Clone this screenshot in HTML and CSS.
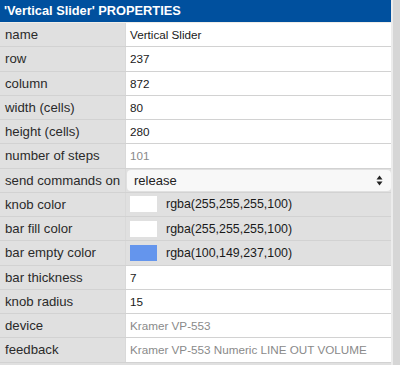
FILE: index.html
```html
<!DOCTYPE html>
<html lang="en">
<head>
  <meta charset="UTF-8">
  <title>Vertical Slider properties</title>
  <link rel="stylesheet" href="styles.css">
</head>
<body>
  <div class="frame">
    <div class="panel">
      <div class="panel-title">'Vertical Slider' PROPERTIES</div>
      <table class="props">
        <tr><td class="label">name</td><td class="value">Vertical Slider</td></tr>
        <tr><td class="label">row</td><td class="value">237</td></tr>
        <tr><td class="label">column</td><td class="value">872</td></tr>
        <tr><td class="label">width (cells)</td><td class="value">80</td></tr>
        <tr><td class="label">height (cells)</td><td class="value">280</td></tr>
        <tr><td class="label">number of steps</td><td class="value muted">101</td></tr>
        <tr>
          <td class="label">send commands on</td>
          <td class="value grey">
            <div class="select">
              <span>release</span>
              <svg class="arrows" width="7" height="11" viewBox="0 0 7 11"><path d="M3.5 0.5 L6.5 4.5 L0.5 4.5 Z M3.5 10.5 L6.5 6.5 L0.5 6.5 Z" fill="#222"/></svg>
            </div>
          </td>
        </tr>
        <tr>
          <td class="label">knob color</td>
          <td class="value grey"><div class="color"><span class="swatch"></span>rgba(255,255,255,100)</div></td>
        </tr>
        <tr>
          <td class="label">bar fill color</td>
          <td class="value grey"><div class="color"><span class="swatch"></span>rgba(255,255,255,100)</div></td>
        </tr>
        <tr>
          <td class="label">bar empty color</td>
          <td class="value grey"><div class="color"><span class="swatch" style="background: rgb(100,149,237)"></span>rgba(100,149,237,100)</div></td>
        </tr>
        <tr><td class="label">bar thickness</td><td class="value">7</td></tr>
        <tr><td class="label">knob radius</td><td class="value">15</td></tr>
        <tr><td class="label">device</td><td class="value muted">Kramer VP-553</td></tr>
        <tr><td class="label">feedback</td><td class="value muted">Kramer VP-553 Numeric LINE OUT VOLUME</td></tr>
      </table>
    </div>
    <div class="scrollbar"></div>
  </div>
</body>
</html>
```

FILE: styles.css
```css
body {
  margin: 0;
  font-family: 'Liberation Sans', Arial, sans-serif;
  background-color: #ececec;
}
.frame {
  display: flex;
  gap: 2px;
  height: 365px;
  overflow: hidden;
}
.panel {
  width: 391px;
  background-color: #e0e0e0;
}
.panel-title {
  height: 22px;
  line-height: 22px;
  padding-left: 4px;
  background-color: #00509e;
  color: #ffffff;
  font-size: 12.8px;
  font-weight: bold;
  border-bottom: 1px solid #f0ede8;
}
.scrollbar {
  flex: 1;
  background-color: #d6d6d6;
}
.props {
  width: 100%;
  border-collapse: collapse;
  table-layout: fixed;
}
.props td {
  height: 23.25px;
  padding: 0;
  border-bottom: 1px solid #d2d2d2;
}
.label {
  width: 120px;
  padding-left: 5px !important;
  font-size: 13.2px;
  color: #2a2a2a;
  background-color: #e0e0e0;
  border-right: 1px solid #d9d9d9;
}
.value {
  padding-left: 4px !important;
  font-size: 11.7px;
  color: #1a1a1a;
  background-color: #ffffff;
  white-space: nowrap;
  overflow: hidden;
}
.value.muted {
  color: #8a8a8a;
}
.value.grey {
  background-color: #e0e0e0;
  padding-left: 0 !important;
}
.select {
  display: flex;
  align-items: center;
  justify-content: space-between;
  height: 21px;
  margin: 0 0 0 1px;
  padding: 0 8px 0 7px;
  font-size: 13px;
  color: #222;
  background-color: #f8f8f8;
  border-radius: 4px;
}
.color {
  display: flex;
  align-items: center;
  gap: 9px;
  padding-left: 4px;
  font-size: 12.4px;
  color: #1a1a1a;
}
.swatch {
  width: 27px;
  height: 16px;
  background-color: #ffffff;
}
```
